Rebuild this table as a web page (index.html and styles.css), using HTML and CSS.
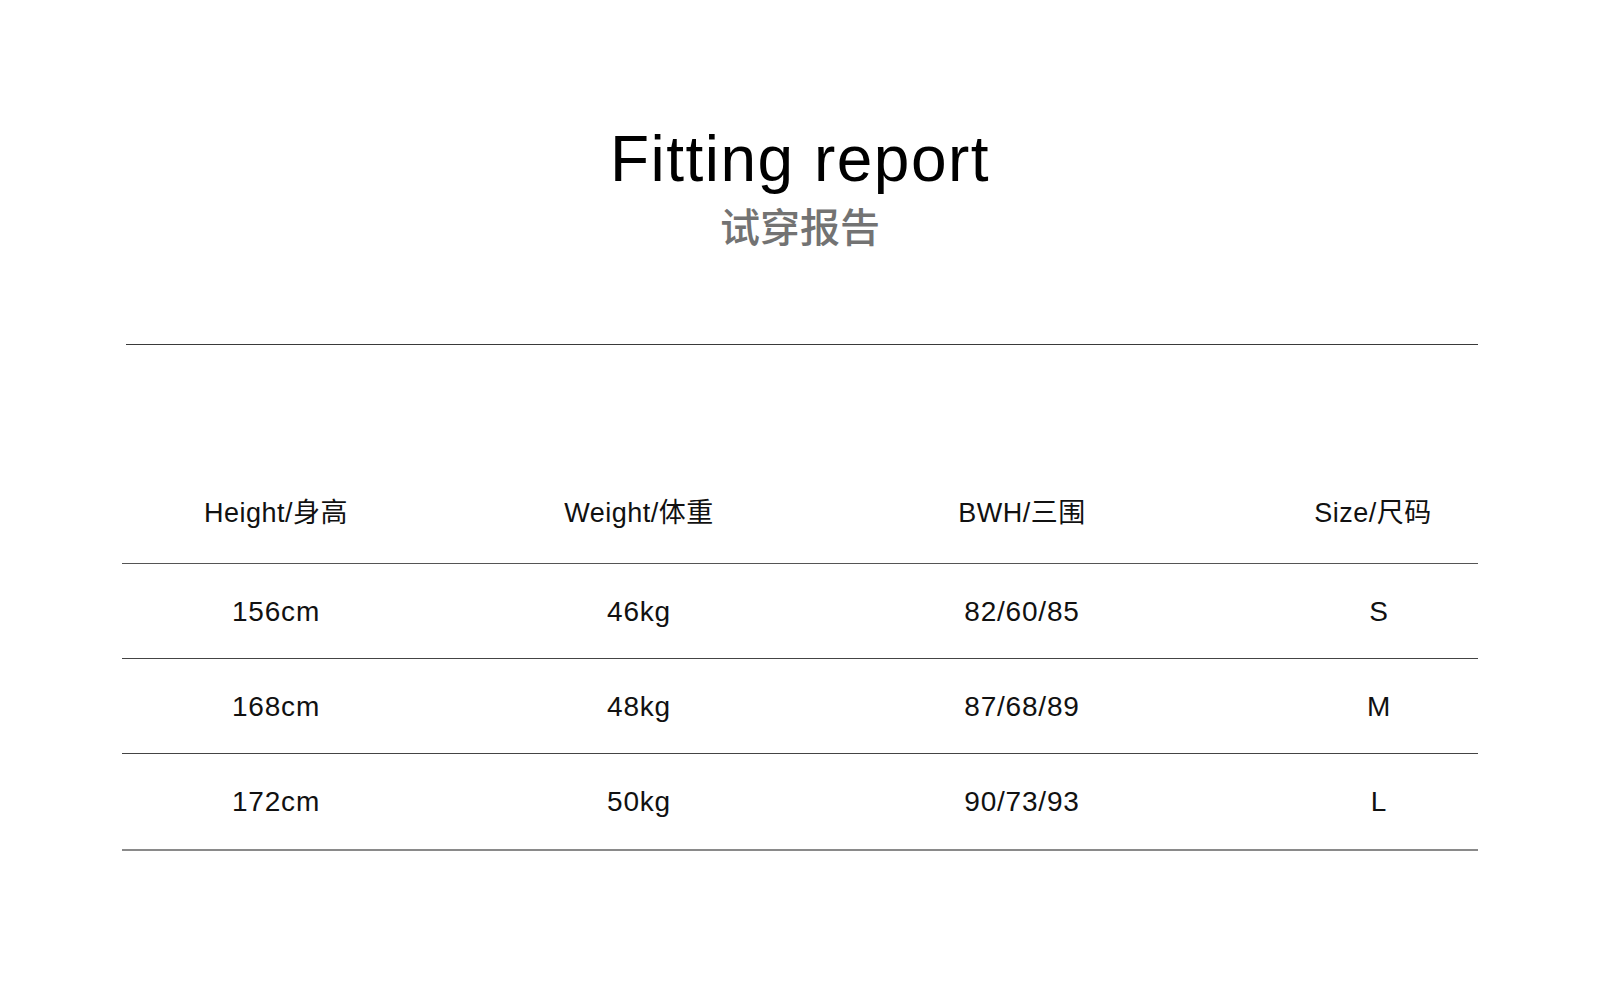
FILE: index.html
```html
<!DOCTYPE html>
<html lang="en">
<head>
<meta charset="utf-8">
<title>Fitting report</title>
<link rel="stylesheet" href="styles.css">
</head>
<body>
<main class="page">
  <header class="heading">
    <h1 class="title">Fitting report</h1>
    <p class="subtitle">试穿报告</p>
  </header>
  <hr class="rule">
  <section class="table">
    <div class="row head">
      <div class="cell">Height/身高</div>
      <div class="cell">Weight/体重</div>
      <div class="cell">BWH/三围</div>
      <div class="cell last">Size/尺码</div>
    </div>
    <div class="row">
      <div class="cell">156cm</div>
      <div class="cell">46kg</div>
      <div class="cell">82/60/85</div>
      <div class="cell last">S</div>
    </div>
    <div class="row">
      <div class="cell">168cm</div>
      <div class="cell">48kg</div>
      <div class="cell">87/68/89</div>
      <div class="cell last">M</div>
    </div>
    <div class="row end">
      <div class="cell">172cm</div>
      <div class="cell">50kg</div>
      <div class="cell">90/73/93</div>
      <div class="cell last">L</div>
    </div>
  </section>
</main>
</body>
</html>
```

FILE: styles.css
```css
html, body {
  margin: 0;
  padding: 0;
  background: #ffffff;
}

body {
  width: 1600px;
  height: 990px;
  overflow: hidden;
  font-family: "Liberation Sans", Arial, "Noto Sans CJK SC", sans-serif;
  color: #111111;
}

.page {
  display: flex;
  flex-direction: column;
}

.heading {
  display: flex;
  flex-direction: column;
  align-items: center;
  padding-top: 127px;
}

.title {
  margin: 0;
  font-size: 64px;
  line-height: 64px;
  font-weight: 400;
  color: #000000;
  letter-spacing: 1.5px;
}

.subtitle {
  margin: 11px 0 0 0;
  font-family: "Noto Sans CJK SC", sans-serif;
  font-size: 40px;
  line-height: 46px;
  font-weight: 500;
  color: #737373;
}

.rule {
  margin: 96px 122px 0 126px;
  border: 0;
  border-top: 1px solid #3a3a3a;
  height: 0;
}

.table {
  margin: 124px 122px 0 122px;
  display: flex;
  flex-direction: column;
}

.row {
  display: grid;
  grid-template-columns: 308px 418px 348px 282px;
  height: 94px;
  line-height: 96px;
  font-size: 28px;
  border-bottom: 1px solid #444444;
  text-align: center;
  letter-spacing: 0.8px;
}

.row.head {
  font-size: 27px;
  line-height: 88px;
  padding-bottom: 6px;
  height: 88px;
  border-bottom-color: #555555;
  letter-spacing: 0.5px;
}

.row.end {
  height: 95px;
  border-bottom: 2px solid #8a8a8a;
}

.cell {
  white-space: nowrap;
}

.cell.last {
  padding-left: 84px;
}

.head .cell.last {
  padding-left: 72px;
}
```
